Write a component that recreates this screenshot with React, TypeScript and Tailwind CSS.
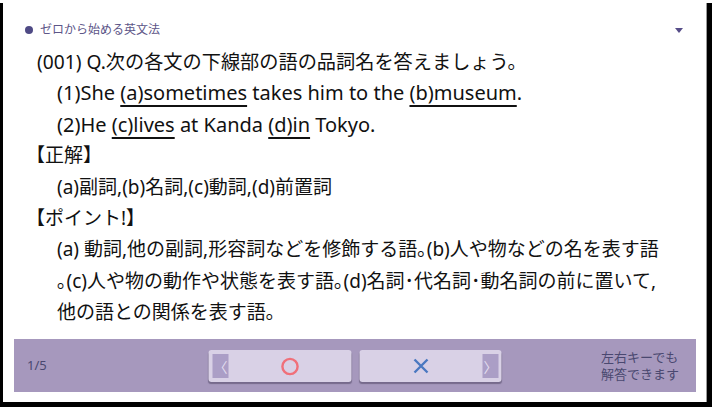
import React from 'react';

const U = ({ children }: { children: React.ReactNode }) => (
  <span className="underline decoration-[1.5px] underline-offset-[5px]">{children}</span>
);

export default function App() {
  return (
    <div
      className="w-[712px] h-[407px] bg-black"
      style={{ fontFamily: '"Noto Sans", "Noto Sans CJK JP", sans-serif' }}
    >
      <div className="ml-[3px] mt-[3px] w-[704px] h-[399px] bg-white border-r border-[#9a9a9a] flex flex-col">
        {/* header */}
        <div className="mt-[19px] h-4 flex items-center pl-[22px] pr-[23px]">
          <div className="w-2 h-2 rounded-full bg-[#4f4a85]" />
          <div className="ml-[7px] text-[12px] leading-4 text-[#5d5688]">ゼロから始める英文法</div>
          <div className="ml-auto w-0 h-0 border-l-4 border-r-4 border-t-[5px] border-l-transparent border-r-transparent border-t-[#564d88]" />
        </div>

        {/* body */}
        <div className="mt-2 pl-[34px] text-[19px] leading-[31.4px] text-[#111]">
          <div className="text-[19.2px]">(001) Q.次の各文の下線部の語の品詞名を答えましょう。</div>
          <div className="pl-5 text-[20px]">
            (1)She <U>(a)sometimes</U> takes him to the <U>(b)museum</U>.
          </div>
          <div className="pl-5 text-[20px]">
            (2)He <U>(c)lives</U> at Kanda <U>(d)in</U> Tokyo.
          </div>
          <div className="-ml-[11px]">【正解】</div>
          <div className="pl-5">(a)副詞,(b)名詞,(c)動詞,(d)前置詞</div>
          <div className="-ml-[11px]">【ポイント!】</div>
          <div className="pl-5">(a) 動詞,他の副詞,形容詞などを修飾する語｡(b)人や物などの名を表す語</div>
          <div className="pl-5">｡(c)人や物の動作や状態を表す語｡(d)名詞･代名詞･動名詞の前に置いて,</div>
          <div className="pl-5">他の語との関係を表す語｡</div>
        </div>

        {/* bottom bar */}
        <div className="mt-auto mb-[10px] ml-[11px] mr-[10px] h-[53px] bg-[#a698bd] flex items-center relative">
          <div className="pl-[13px] text-[13px] text-[#4a4870]">1/5</div>
          <div className="absolute left-1/2 -translate-x-1/2 top-[11px] flex gap-2">
            <button className="w-[143px] h-8 rounded-[3px] bg-[#d9d1e6] shadow-[0_2px_1px_rgba(60,50,80,0.45)] flex items-center pl-1">
              <span className="w-4 h-6 bg-[#ab9ec6] flex items-center justify-center text-[#e4def0] text-[14px]">〈</span>
              <span className="flex-1 flex justify-center">
                <svg width="19" height="19" viewBox="0 0 19 19">
                  <circle cx="9.5" cy="9.5" r="7.6" fill="none" stroke="#f0707a" strokeWidth="2.4" />
                </svg>
              </span>
            </button>
            <button className="w-[142px] h-8 rounded-[3px] bg-[#d9d1e6] shadow-[0_2px_1px_rgba(60,50,80,0.45)] flex items-center pr-[3px]">
              <span className="flex-1 flex justify-center">
                <svg width="17" height="16" viewBox="0 0 17 16">
                  <path d="M2 1.5 L15 14.5 M15 1.5 L2 14.5" stroke="#4a78c0" strokeWidth="2.4" />
                </svg>
              </span>
              <span className="w-4 h-6 bg-[#ab9ec6] flex items-center justify-center text-[#e4def0] text-[14px]">〉</span>
            </button>
          </div>
          <div className="ml-auto pr-[17px] text-[13px] leading-[17px] text-[#4a4870]">
            左右キーでも
            <br />
            解答できます
          </div>
        </div>
      </div>
    </div>
  );
}
